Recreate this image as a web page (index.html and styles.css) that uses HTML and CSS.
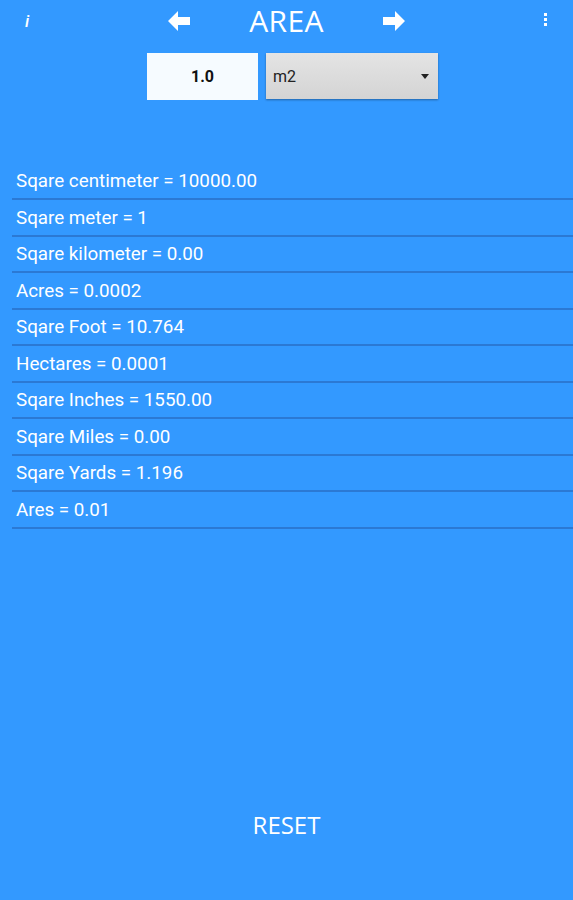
FILE: index.html
```html
<!DOCTYPE html>
<html lang="en">
<head>
    <meta charset="UTF-8">
    <meta name="viewport" content="width=device-width, initial-scale=1.0">
    <title>Area Converter</title>
    <link rel="stylesheet" href="styles.css">
</head>
<body>
    <div class="app">
        <div class="topbar">
            <span class="info">i</span>
            <div class="nav">
                <svg class="arrow" width="26" height="22" viewBox="0 0 26 22">
                    <path d="M12 1 L2 11 L12 21 L12 15 L24 15 L24 7 L12 7 Z" fill="#fff"/>
                </svg>
                <h1 class="title">AREA</h1>
                <svg class="arrow" width="26" height="22" viewBox="0 0 26 22">
                    <path d="M14 1 L24 11 L14 21 L14 15 L2 15 L2 7 L14 7 Z" fill="#fff"/>
                </svg>
            </div>
            <span class="menu">
                <i></i><i></i><i></i>
            </span>
        </div>

        <div class="inputs">
            <div class="value">1.0</div>
            <div class="unit">
                <span>m2</span>
                <svg width="8" height="5" viewBox="0 0 8 5"><path d="M0 0 L8 0 L4 5 Z" fill="#222"/></svg>
            </div>
        </div>

        <ul class="results">
            <li>Sqare centimeter = 10000.00</li>
            <li>Sqare meter = 1</li>
            <li>Sqare kilometer = 0.00</li>
            <li>Acres = 0.0002</li>
            <li>Sqare Foot = 10.764</li>
            <li>Hectares = 0.0001</li>
            <li>Sqare Inches = 1550.00</li>
            <li>Sqare Miles = 0.00</li>
            <li>Sqare Yards = 1.196</li>
            <li>Ares = 0.01</li>
        </ul>

        <div class="reset">RESET</div>
    </div>
</body>
</html>
```

FILE: styles.css
```css
html, body {
    margin: 0;
    padding: 0;
}
body {
    background: #3399ff;
    font-family: Roboto, "Liberation Sans", sans-serif;
    color: #fff;
}
.app {
    width: 573px;
    height: 900px;
    display: flex;
    flex-direction: column;
}
.topbar {
    height: 42px;
    display: grid;
    grid-template-columns: 1fr auto 1fr;
    align-items: center;
    padding: 0 25px 0 25px;
}
.info {
    font-family: Roboto, sans-serif;
    font-style: italic;
    font-weight: 500;
    font-size: 17px;
    justify-self: start;
}
.nav {
    display: flex;
    align-items: center;
    gap: 57px;
}
.title {
    margin: 0;
    font-family: "Open Sans", sans-serif;
    font-weight: normal;
    font-size: 30px;
    line-height: 42px;
    letter-spacing: 0.3px;
}
.menu {
    justify-self: end;
    display: flex;
    flex-direction: column;
    gap: 2px;
    width: 4px;
    margin-bottom: 4px;
}
.menu i {
    width: 3px;
    height: 3px;
    background: #fff;
    display: block;
}
.inputs {
    display: flex;
    justify-content: center;
    gap: 8px;
    margin-top: 11px;
    margin-left: 12px;
}
.value {
    width: 111px;
    height: 47px;
    background: #f6fbff;
    color: #111;
    font-weight: bold;
    font-size: 16px;
    display: flex;
    align-items: center;
    justify-content: center;
}
.unit {
    width: 172px;
    height: 46px;
    background: linear-gradient(#e4e4e4, #d4d4d4);
    box-shadow: 0 1px 2px rgba(0, 0, 0, 0.35);
    color: #222;
    font-size: 16px;
    display: flex;
    align-items: center;
    justify-content: space-between;
    padding: 0 9px 0 7px;
    box-sizing: border-box;
}
.results {
    list-style: none;
    margin: 63px 0 0 12px;
    padding: 0;
}
.results li {
    height: 35px;
    line-height: 36px;
    padding-left: 4px;
    font-size: 18.8px;
    border-bottom: 2px solid #2b79d4;
    margin-bottom: -0.5px;
}
.reset {
    margin-top: auto;
    margin-bottom: 59px;
    text-align: center;
    font-family: "Open Sans", sans-serif;
    font-size: 24px;
}
```
